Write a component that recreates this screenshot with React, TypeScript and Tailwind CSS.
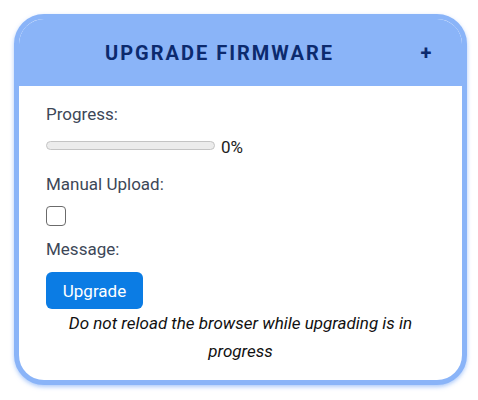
import React from "react";

export default function App() {
  return (
    <div className="min-h-[400px] w-[478px] bg-white pt-[14px] pl-[14px] font-['Roboto',sans-serif]">
      <div className="w-[453px] overflow-hidden rounded-[30px] border-[5px] border-[#8ab4f8] bg-white shadow-[0_2px_4px_rgba(138,180,248,0.7)]">
        {/* Header */}
        <div className="flex h-[67px] items-center bg-[#8ab4f8] pr-[30px]">
          <h2 className="flex-1 text-center text-[20px] font-bold tracking-[2px] text-[#0c2a6e]">
            UPGRADE FIRMWARE
          </h2>
          <span className="w-[12px] text-center text-[20px] font-bold leading-none text-[#0c2a6e]">+</span>
        </div>

        {/* Body */}
        <div className="flex flex-col px-[27px] pt-[16px] pb-[15px] text-[17px] leading-[24px]">
          <span className="text-[#3d4757]">Progress:</span>
          <div className="mt-[9px] flex h-[24px] items-center gap-[6px]">
            <div className="mb-[4px] h-[9px] w-[169px] rounded-full border border-[#c4c4c4] bg-[#ececec]" />
            <span className="text-[#222]">0%</span>
          </div>
          <span className="mt-[13px] text-[#3d4757]">Manual Upload:</span>
          <div className="mt-[10px] h-[20px] w-[20px] rounded-[4px] border border-[#6b6b6b] bg-white" />
          <span className="mt-[11px] text-[#3d4757]">Message:</span>
          <button
            type="button"
            className="mt-[11px] h-[37px] w-[97px] rounded-[6px] bg-[#0b7ce4] text-[17px] text-white"
          >
            Upgrade
          </button>
          <p className="px-[20px] text-center text-[17px] leading-[28px] text-[#111] italic">
            Do not reload the browser while upgrading is in progress
          </p>
        </div>
      </div>
    </div>
  );
}
